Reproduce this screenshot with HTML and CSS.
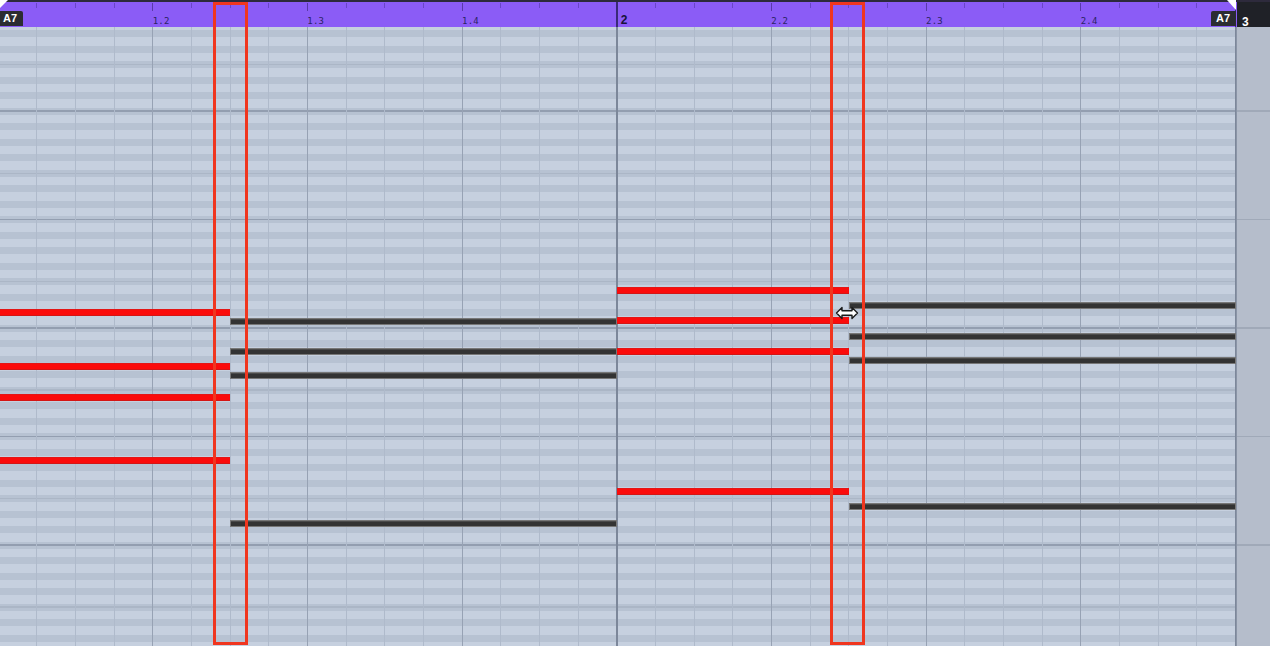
FILE: index.html
```html
<!DOCTYPE html>
<html lang="en">
<head>
<meta charset="utf-8">
<title>Piano Roll</title>
<link rel="stylesheet" href="styles.css">
</head>
<body>
<div class="roll">
  <header class="ruler">
    <div class="ruler-track">
      <div class="beat"></div>
      <div class="beat"><span class="beat-label">1.2</span></div>
      <div class="beat"><span class="beat-label">1.3</span></div>
      <div class="beat"><span class="beat-label">1.4</span></div>
      <div class="beat bar"><span class="bar-label">2</span></div>
      <div class="beat"><span class="beat-label">2.2</span></div>
      <div class="beat"><span class="beat-label">2.3</span></div>
      <div class="beat"><span class="beat-label">2.4</span></div>
      <span class="region-flag region-flag-start"></span>
      <span class="region-badge region-badge-start">A7</span>
      <span class="region-flag region-flag-end"></span>
      <span class="region-badge region-badge-end">A7</span>
    </div>
    <div class="ruler-end"><span class="bar-number">3</span></div>
  </header>

  <div class="editor">
    <div class="note-grid">
      <!-- bar 1: active notes -->
      <div class="note note-on" style="left:0;top:282px;width:230px"></div>
      <div class="note note-on" style="left:0;top:336px;width:230px"></div>
      <div class="note note-on" style="left:0;top:367px;width:230px"></div>
      <div class="note note-on" style="left:0;top:430px;width:230px"></div>
      <!-- bar 1: muted notes -->
      <div class="note note-off" style="left:230px;top:291px;width:387px"></div>
      <div class="note note-off" style="left:230px;top:321px;width:387px"></div>
      <div class="note note-off" style="left:230px;top:345px;width:387px"></div>
      <div class="note note-off" style="left:230px;top:493px;width:387px"></div>
      <!-- bar 2: active notes -->
      <div class="note note-on" style="left:617px;top:260px;width:232px"></div>
      <div class="note note-on" style="left:617px;top:290px;width:232px"></div>
      <div class="note note-on" style="left:617px;top:321px;width:232px"></div>
      <div class="note note-on" style="left:617px;top:461px;width:232px"></div>
      <!-- bar 2: muted notes -->
      <div class="note note-off" style="left:849px;top:275px;width:387px"></div>
      <div class="note note-off" style="left:849px;top:306px;width:387px"></div>
      <div class="note note-off" style="left:849px;top:330px;width:387px"></div>
      <div class="note note-off" style="left:849px;top:476px;width:387px"></div>

      <svg class="resize-cursor" width="24" height="14" viewBox="0 0 24 14" aria-hidden="true">
        <path d="M1.5 7 L7 1.5 L7 4.8 L17 4.8 L17 1.5 L22.5 7 L17 12.5 L17 9.2 L7 9.2 L7 12.5 Z" fill="#ffffff" stroke="#1a1a1a" stroke-width="1.4" stroke-linejoin="round"/>
      </svg>
    </div>
    <div class="gutter"></div>
  </div>

  <div class="selection selection-a"></div>
  <div class="selection selection-b"></div>
</div>
</body>
</html>
```

FILE: styles.css
```css
* {
  box-sizing: border-box;
}

html,
body {
  margin: 0;
  padding: 0;
  width: 1270px;
  height: 646px;
  overflow: hidden;
  background: #c5cfde;
}

.roll {
  position: relative;
  display: flex;
  flex-direction: column;
  width: 1270px;
  height: 646px;
  font-family: "Liberation Sans", Arial, sans-serif;
}

/* ---------- ruler ---------- */

.ruler {
  display: flex;
  flex: 0 0 27px;
  height: 27px;
  border-top: 2px solid #2d2a3c;
}

.ruler-track {
  position: relative;
  display: flex;
  flex: 0 0 1237px;
  background-color: #8b5cf6;
  background-image:
    repeating-linear-gradient(90deg, transparent 0 616.2px, #3a2a78 616.2px 617.6px, transparent 617.6px 618.7px),
    repeating-linear-gradient(90deg, transparent 0 152.2px, #5a3aa8 152.2px 153.3px, transparent 153.3px 154.675px),
    repeating-linear-gradient(90deg, transparent 0 36.2px, #6a46c6 36.2px 37.2px, transparent 37.2px 38.669px);
  background-size: 100% 100%, 100% 8px, 100% 5px;
  background-position: 0 0, 0 1px, 0 1px;
  background-repeat: no-repeat;
}

.beat {
  flex: 0 0 154.675px;
  padding-top: 12px;
  line-height: 10px;
}

.beat:first-child {
  margin-left: -2px;
}

.beat-label {
  font-family: "DejaVu Sans Mono", "Liberation Mono", monospace;
  font-size: 9px;
  letter-spacing: 0.2px;
  color: #2a2363;
}

.bar-label {
  display: inline-block;
  padding-left: 4px;
  font-size: 12px;
  font-weight: 700;
  color: #17123a;
}

.region-badge {
  position: absolute;
  top: 9px;
  height: 15px;
  padding: 0 3px;
  background: #2b2c31;
  color: #ffffff;
  font-size: 11px;
  font-weight: 700;
  line-height: 15px;
}

.region-badge-start {
  left: 0;
  width: 23px;
  border-top-right-radius: 2px;
}

.region-badge-end {
  left: 1211px;
  width: 25px;
  padding-left: 5px;
  border-top-left-radius: 2px;
}

.region-flag {
  position: absolute;
  top: -2px;
  width: 9px;
  height: 10px;
  background: #ffffff;
}

.region-flag-start {
  left: 0;
  width: 8px;
  height: 8px;
  clip-path: polygon(0 0, 100% 0, 0 100%);
}

.region-flag-end {
  left: 1227px;
  clip-path: polygon(0 0, 100% 0, 100% 100%);
}

.ruler-end {
  flex: 1;
  padding: 10px 0 0 5px;
  background: #1f2127;
}

.bar-number {
  color: #ffffff;
  font-size: 12px;
  font-weight: 700;
  line-height: 14px;
}

/* ---------- note editor ---------- */

.editor {
  display: flex;
  flex: 1;
}

.note-grid {
  position: relative;
  flex: 0 0 1237px;
  border-right: 1px solid #8a94a6;
  background-color: #c6d0df;
  background-image:
    repeating-linear-gradient(90deg, transparent 0 616.2px, #7c879a 616.2px 617.7px, transparent 617.7px 618.7px),
    repeating-linear-gradient(90deg, transparent 0 152.2px, #97a2b4 152.2px 153.4px, transparent 153.4px 154.675px),
    repeating-linear-gradient(90deg, transparent 0 36.2px, #afbacb 36.2px 37.3px, transparent 37.3px 38.669px),
    repeating-linear-gradient(180deg, transparent 0 37px, #abb6c6 37px 38.2px, transparent 38.2px 83.5px, #939eb0 83.5px 84.8px, transparent 84.8px 108.5px),
    repeating-linear-gradient(180deg, transparent 0 3px, #b7c2d2 3px 10px, transparent 10px 15.5px);
}

.gutter {
  flex: 1;
  background-color: #b5bdcb;
  background-image:
    repeating-linear-gradient(180deg, transparent 0 83.5px, #a0a9b8 83.5px 84.8px, transparent 84.8px 108.5px);
}

.note {
  position: absolute;
  height: 7px;
}

.note-on {
  background: #fb0b0b;
  border-top: 1px solid #e31616;
  border-bottom: 1px solid #d41515;
}

.note-off {
  background: #333333;
  border: 1px solid #777777;
  box-shadow: inset 0 1px 0 #4a4a4a;
}

.resize-cursor {
  position: absolute;
  left: 835px;
  top: 279px;
}

/* ---------- selection outlines ---------- */

.selection {
  position: absolute;
  top: 2px;
  width: 35px;
  height: 643px;
  border: 3px solid #f0361f;
}

.selection-a {
  left: 213px;
}

.selection-b {
  left: 830px;
}
```
